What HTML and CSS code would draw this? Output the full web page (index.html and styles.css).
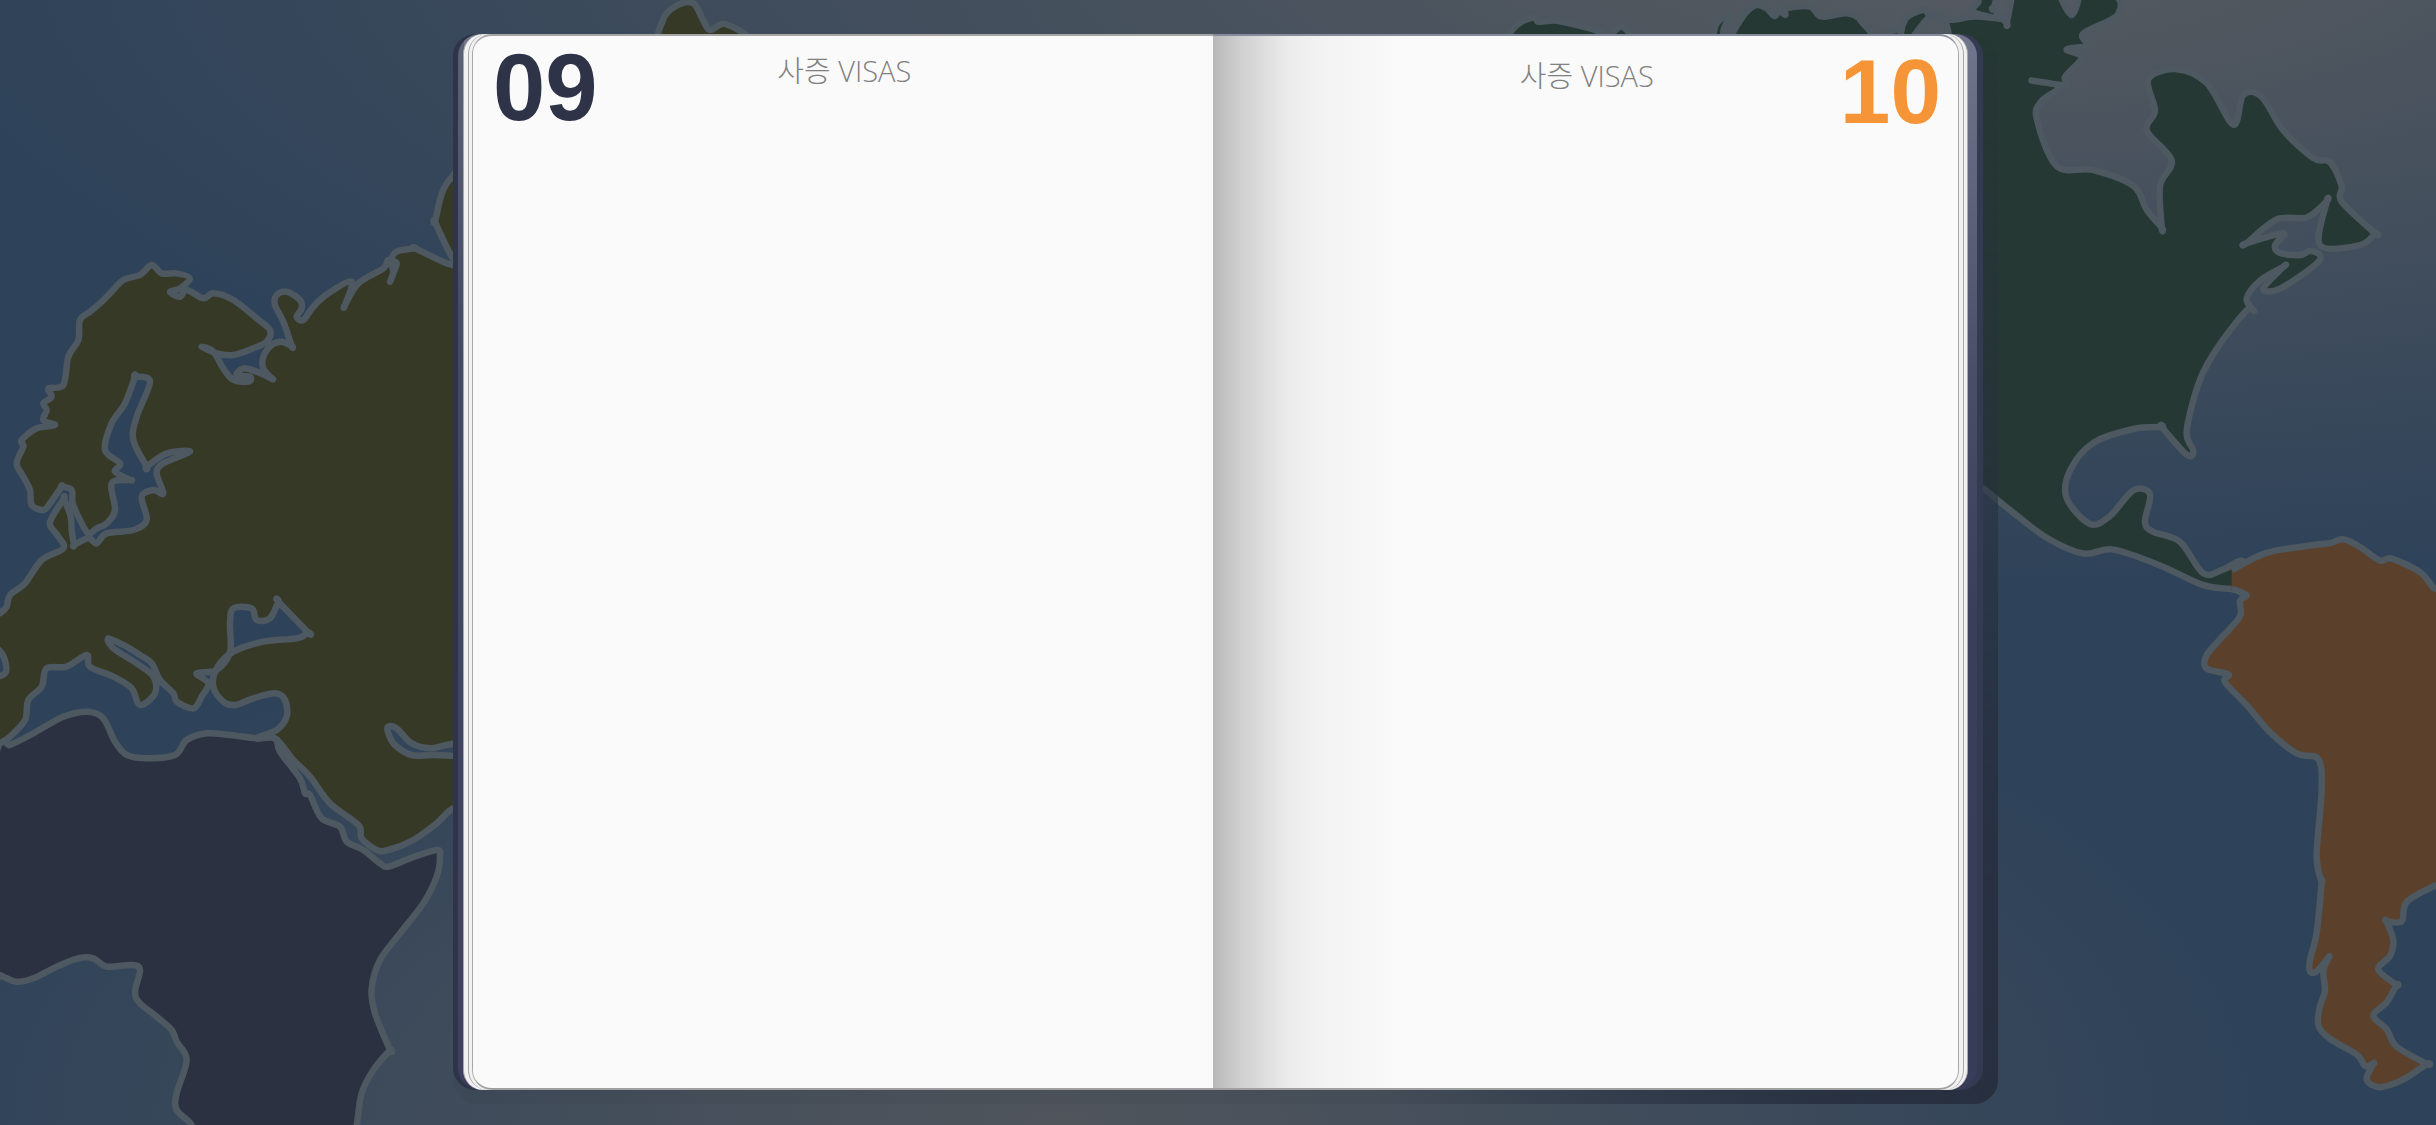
FILE: index.html
```html
<!DOCTYPE html>
<html lang="ko">
<head>
<meta charset="utf-8">
<title>사증 VISAS</title>
<link rel="stylesheet" href="styles.css">
</head>
<body>
<svg class="map" viewBox="0 0 2436 1125" width="2436" height="1125" aria-hidden="true">
  <g transform="translate(0 240) scale(0.33333)">
    <path class="land africa smooth" d="M-20,1525 30,1515 100,1480 190,1430 265,1415 310,1435 345,1505 380,1545 440,1555 525,1545 560,1500 620,1480 690,1485 770,1495 825,1495 840,1535 900,1615 915,1660 930,1665 965,1735 1020,1760 1040,1805 1090,1830 1140,1870 1165,1880 1230,1855 1310,1830 1320,1850 1310,1910 1270,1990 1200,2080 1140,2160 1115,2245 1125,2320 1170,2430 1170,2430 1120,2490 1085,2560 1070,2660 1060,2720 590,2720 575,2655 530,2610 530,2560 560,2460 530,2405 515,2370 470,2330 420,2290 405,2255 420,2190 395,2175 320,2180 280,2155 235,2155 170,2180 100,2215 50,2225 0,2205 -20,2195 Z"/>
    <path class="land europe smooth" d="M-20,1125 0,1120 20,1100 30,1065 75,1030 125,960 190,925 175,890 150,855 160,825 192,775 192,775 212,830 215,870 222,915 222,915 265,895 290,910 320,880 400,870 440,840 425,770 460,750 490,760 470,700 490,670 570,635 500,640 440,680 440,680 400,600 410,530 450,425 405,410 405,410 375,490 335,550 315,630 360,670 345,695 390,720 390,720 335,730 345,810 320,850 290,865 265,880 240,840 218,790 215,750 185,740 185,740 150,790 130,810 95,795 90,750 70,710 50,670 70,620 65,600 110,565 165,555 130,540 140,510 130,490 155,470 145,445 190,435 205,350 235,300 240,240 270,215 300,190 330,160 370,120 420,105 455,75 485,100 530,100 570,115 540,145 510,155 540,170 560,150 610,175 640,160 700,180 770,235 810,270 800,305 760,325 700,345 650,340 605,320 640,335 670,385 700,420 745,425 750,410 710,405 730,385 770,395 815,415 815,415 790,385 790,350 815,315 845,305 875,318 875,318 850,245 825,195 830,165 860,155 900,180 905,205 890,230 910,240 940,200 985,160 1055,125 1035,195 1035,195 1075,130 1150,85 1165,60 1180,95 1170,125 1178,105 1190,70 1175,60 1190,35 1245,25 1245,25 1355,75 1420,75 1420,1705 1360,1705 1310,1750 1240,1800 1165,1830 1130,1830 1085,1795 1075,1755 990,1690 930,1610 880,1560 825,1495 770,1495 830,1470 860,1430 855,1380 825,1360 760,1375 705,1395 670,1385 640,1340 650,1285 700,1235 790,1205 890,1195 925,1178 925,1178 835,1085 835,1085 810,1135 770,1140 755,1105 700,1105 690,1150 690,1235 650,1290 590,1300 625,1330 605,1370 580,1405 530,1385 520,1360 480,1320 455,1270 420,1245 370,1215 325,1195 340,1225 410,1270 460,1310 465,1360 420,1395 395,1345 340,1310 270,1280 260,1245 200,1280 140,1285 125,1340 85,1380 75,1440 30,1490 0,1510 -20,1520 Z M1165,1460 1190,1465 1235,1510 1290,1525 1340,1515 1420,1505 1420,1545 1300,1545 1235,1545 1185,1515 1165,1480 Z M-20,1225 5,1240 18,1275 15,1300 -20,1305 Z"/>
  </g>
  <path class="land europe smooth" d="M665,44 663,20 676,6 693,3 703,20 710,30 725,24 745,40 Z"/>
  <path class="land europe smooth" d="M470,165 452,177 442,193 435,222 435,222 452,257 470,280 Z"/>
  <g transform="translate(1500 0) scale(0.33333)">
    <path class="land america smooth" d="M25,125 25,105 60,68 105,52 115,65 170,62 250,80 310,100 330,125 Z"/>
    <path class="land america smooth" d="M330,125 345,92 370,82 400,125 Z"/>
    <path class="land america smooth" d="M475,125 495,95 520,125 Z"/>
    <path class="land america smooth" d="M640,125 650,70 690,45 672,85 665,125 Z"/>
    <path class="land america smooth" d="M690,125 700,95 740,35 770,15 800,25 825,48 845,15 843,30 856,45 860,25 930,20 965,50 1040,40 1085,65 1085,125 Z"/>
    <path class="land america smooth" d="M1130,125 1190,90 1225,125 Z"/>
  </g>
  <g transform="translate(1960 0) scale(0.33333 0.3954)">
    <path class="land america smooth" d="M-165,110 -165,50 -110,25 -90,38 -30,50 40,42 110,46 110,46 40,30 55,5 75,-20 430,-20 475,35 370,85 385,115 320,125 365,145 315,195 320,215 225,205 225,205 300,220 245,255 230,300 290,420 400,430 520,470 560,530 605,575 605,575 600,470 635,405 560,330 585,280 565,200 650,175 740,210 820,315 850,240 905,245 970,330 1060,400 1110,410 1145,470 1145,510 1245,590 1245,590 1200,620 1080,620 1100,510 1100,510 1040,550 950,555 860,615 860,615 970,590 945,620 960,640 1020,645 1050,635 1080,645 1065,670 960,730 910,730 970,675 970,675 900,710 860,755 880,785 880,785 860,785 780,870 720,960 680,1090 700,1140 680,1150 605,1080 605,1080 520,1085 400,1120 330,1190 320,1260 390,1325 450,1305 520,1240 570,1250 555,1320 580,1345 660,1370 730,1450 790,1440 850,1420 860,1500 820,1490 730,1480 600,1430 460,1390 370,1400 260,1360 150,1290 70,1235 -30,1170 -30,110 Z M100,22 100,22 140,58 140,58 155,-20 120,-20 Z M300,-20 335,38 355,-20 Z"/>
  </g>
  <g transform="translate(2100 520) scale(0.33333 0.3858)">
    <path class="land south-fill smooth" d="M395,130 500,85 640,65 690,60 730,50 780,70 840,105 875,100 960,135 1000,175 1040,200 1060,400 1060,900 1040,940 1000,950 920,990 905,1040 860,1040 860,1040 880,1090 870,1130 835,1165 890,1205 890,1205 860,1250 820,1285 860,1320 890,1365 980,1410 980,1410 910,1450 840,1470 800,1450 820,1410 820,1410 795,1415 770,1385 690,1345 655,1310 660,1260 675,1220 670,1170 685,1135 685,1135 650,1170 630,1170 630,1140 650,1070 665,940 665,940 650,870 665,700 655,620 590,605 510,550 440,480 375,420 385,400 320,385 320,350 370,300 420,250 420,210 440,195 410,182 395,180 395,180 395,130 Z"/>
    <path class="coast smooth" d="M395,130 500,85 640,65 690,60 730,50 780,70 840,105 875,100 960,135 1000,175 1040,200 1060,400 1060,900 1040,940 1000,950 920,990 905,1040 860,1040 860,1040 880,1090 870,1130 835,1165 890,1205 890,1205 860,1250 820,1285 860,1320 890,1365 980,1410 980,1410 910,1450 840,1470 800,1450 820,1410 820,1410 795,1415 770,1385 690,1345 655,1310 660,1260 675,1220 670,1170 685,1135 685,1135 650,1170 630,1170 630,1140 650,1070 665,940 665,940 650,870 665,700 655,620 590,605 510,550 440,480 375,420 385,400 320,385 320,350 370,300 420,250 420,210 440,195 410,182 395,180"/>
  </g>
</svg>
<main class="passport">
  <div class="book-shadow"></div>
  <div class="cover">
    <div class="edge">
      <div class="sheet">
        <div class="sheet">
          <div class="sheet spread">
            <section class="page page-left">
              <header class="page-head">
                <span class="num num-even">09</span>
                <h2 class="title">사증 VISAS</h2>
              </header>
            </section>
            <section class="page page-right">
              <header class="page-head head-right">
                <span></span>
                <h2 class="title">사증 VISAS</h2>
                <span class="num num-odd">10</span>
              </header>
            </section>
          </div>
        </div>
      </div>
    </div>
  </div>
</main>
<script src="map.js"></script>
</body>
</html>
```
FILE: styles.css
```css
* { box-sizing: border-box; }

html, body { margin: 0; height: 100%; }

body {
  position: relative;
  width: 2436px;
  height: 1125px;
  overflow: hidden;
  padding: 34px 0 0 453px;
  background:
    radial-gradient(ellipse 1200px 560px at 1060px 1125px, rgba(84, 87, 92, 0.9) 0, rgba(84, 87, 92, 0) 100%),
    radial-gradient(ellipse 2050px 640px at 1950px -60px, rgba(87, 91, 96, 1) 0, rgba(87, 91, 96, 0) 100%),
    #2e4259;
}

.map { position: absolute; left: 0; top: 0; display: block; }

.land, .coast {
  stroke: #4d5860;
  stroke-width: 6.5px;
  stroke-linejoin: round;
  vector-effect: non-scaling-stroke;
  fill-rule: evenodd;
}
.coast { fill: none; }
.africa { fill: #2b3140; }
.europe { fill: #373927; }
.america { fill: #253833; }
.south-fill { fill: #5b412b; stroke: none; }

.passport {
  position: relative;
  width: 1530px;
  height: 1056px;
}

.book-shadow {
  position: absolute;
  top: 3px;
  left: 0;
  right: -15px;
  bottom: -14px;
  border-radius: 24px;
  background:
    radial-gradient(ellipse 620px 1060px at 100% 100%, rgba(40, 48, 64, 1) 0, rgba(40, 48, 64, 0.95) 25%, rgba(40, 48, 64, 0) 100%),
    rgba(40, 46, 62, 0.07);
}

.cover {
  position: relative;
  height: 100%;
  padding: 0 6px 0 5px;
  border-radius: 22px;
  background: linear-gradient(90deg, #2f3448 0, #343a52 100%);
}

.edge {
  height: 100%;
  padding: 0 9px 0 5px;
  border-radius: 22px;
  background:
    linear-gradient(180deg, #5b6378 0, #444a66 30%, #3d4160 100%) left top / 6px 100% no-repeat,
    linear-gradient(180deg, #72768c 0, #4a4e68 32%, #3a3e5a 55%, #383c58 100%);
}

.sheet {
  height: 100%;
  padding: 0 3.5px;
  border-left: 1.5px solid #a8a8a8;
  border-right: 1.5px solid #a8a8a8;
  border-radius: 20px;
  background: #f1f1f1;
}

.spread {
  display: flex;
  padding: 0;
  background: #fafafa;
}

.page {
  height: 100%;
  border-top: 2px solid #a6a6a6;
  border-bottom: 2px solid #a0a0a0;
}

.page-left {
  flex: 0 0 739.5px;
  background: #fafafa;
  border-radius: 19px 0 0 19px;
}

.page-right {
  flex: 1;
  border-top-color: #868c9c;
  border-radius: 0 19px 19px 0;
  background: linear-gradient(90deg, #b8b8b8 0, #d0d0d0 28px, #ececec 76px, #f3f3f3 110px, #fafafa 190px);
}

.page-head {
  display: grid;
  grid-template-columns: 1fr auto 1fr;
  padding: 0 17px 0 20px;
}

.num {
  font-family: "Liberation Sans", Arial, sans-serif;
  font-weight: 700;
  font-size: 94px;
  line-height: 96px;
}

.num-even { color: #2e3348; margin-top: 4px; }
.num-odd { color: #f59537; text-align: right; font-size: 91px; margin-top: 8px; }

.title {
  margin: 16px 0 0;
  font-family: "Open Sans", "Noto Sans CJK KR", sans-serif;
  font-weight: 300;
  font-size: 29px;
  line-height: 38px;
  color: #808080;
  white-space: nowrap;
}

.head-right .title { margin-top: 21px; }
```
FILE: map.js
```js
// Turns the traced coast points into smooth Catmull-Rom curves.
document.querySelectorAll('.smooth').forEach(function (path) {
  var d = path.getAttribute('d');
  var out = d.split(/(?=M)/).map(function (sub) {
    var closed = /Z\s*$/.test(sub);
    var n = sub.match(/-?\d+(\.\d+)?/g).map(Number);
    var p = [];
    for (var i = 0; i < n.length; i += 2) p.push([n[i], n[i + 1]]);
    var len = p.length;
    var at = function (i) {
      if (closed) return p[(i + len) % len];
      return p[Math.max(0, Math.min(len - 1, i))];
    };
    var s = 'M' + p[0][0] + ' ' + p[0][1];
    var segs = closed ? len : len - 1;
    for (var j = 0; j < segs; j++) {
      var a = at(j - 1), b = at(j), c = at(j + 1), e = at(j + 2);
      s += 'C' + (b[0] + (c[0] - a[0]) / 6) + ' ' + (b[1] + (c[1] - a[1]) / 6) + ' ' +
        (c[0] - (e[0] - b[0]) / 6) + ' ' + (c[1] - (e[1] - b[1]) / 6) + ' ' + c[0] + ' ' + c[1];
    }
    return s + (closed ? 'Z' : '');
  });
  path.setAttribute('d', out.join(' '));
});
```
